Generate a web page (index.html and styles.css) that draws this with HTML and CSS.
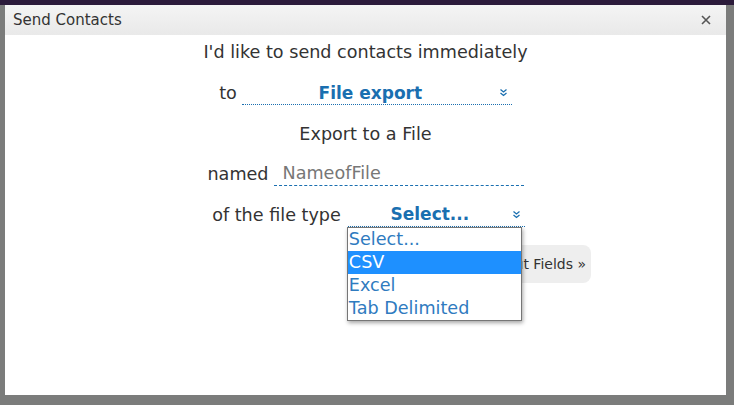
FILE: index.html
```html
<!DOCTYPE html>
<html>
<head>
<meta charset="utf-8">
<link rel="stylesheet" href="styles.css">
</head>
<body>
<div class="page">
  <div class="topbar"></div>
  <div class="dialog">
    <div class="titlebar">
      <span class="title">Send Contacts</span>
      <svg class="close" width="12" height="12" viewBox="0 0 12 12"><path d="M2 2 L10 10 M10 2 L2 10" stroke="#555" stroke-width="1.6" fill="none"/></svg>
    </div>
    <div class="content">
      <div class="intro">I'd like to send contacts immediately</div>
      <div class="row gap5">
        <span class="label">to</span>
        <div class="select sel-to">
          <span class="sel-text">File export</span>
          <svg class="chev" width="9" height="9" viewBox="0 0 9 9"><path d="M1.5 1.5 L4.5 4 L7.5 1.5 M1.5 5 L4.5 7.5 L7.5 5" stroke="#1a6fb0" stroke-width="1.3" fill="none"/></svg>
        </div>
      </div>
      <div class="row"><span class="label">Export to a File</span></div>
      <div class="row gap5">
        <span class="label">named</span>
        <div class="input">NameofFile</div>
      </div>
      <div class="row gap7 shift">
        <span class="label">of the file type</span>
        <div class="select sel-type">
          <span class="sel-text">Select...</span>
          <svg class="chev" width="9" height="9" viewBox="0 0 9 9"><path d="M1.5 1.5 L4.5 4 L7.5 1.5 M1.5 5 L4.5 7.5 L7.5 5" stroke="#1a6fb0" stroke-width="1.3" fill="none"/></svg>
          <ul class="listbox">
            <li>Select...</li>
            <li class="active">CSV</li>
            <li>Excel</li>
            <li>Tab Delimited</li>
          </ul>
        </div>
      </div>
      <div class="actions">
        <span class="btn">Map Input Fields »</span>
      </div>
    </div>
  </div>
</div>
</body>
</html>
```
FILE: styles.css
```css
* { box-sizing: border-box; }
html, body { margin: 0; padding: 0; }
body {
  background: #7b7c7b;
  font-family: "DejaVu Sans", "Open Sans", sans-serif;
  width: 734px;
  height: 405px;
  overflow: hidden;
}
.page { width: 734px; height: 405px; }
.topbar {
  height: 5px;
  background: #2c1b3b;
}
.dialog {
  margin-left: 5px;
  width: 721px;
  height: 390px;
  background: #fff;
  display: flex;
  flex-direction: column;
}
.titlebar {
  height: 30px;
  background: linear-gradient(#f4f4f4, #e9e9e9);
  display: flex;
  align-items: center;
  justify-content: space-between;
  padding: 0 14px 0 8px;
}
.title { font-size: 15px; color: #333; }
.close { display: block; }
.content {
  display: flex;
  flex-direction: column;
  align-items: center;
}
.intro {
  height: 34px;
  line-height: 34px;
  margin-bottom: 4px;
  font-size: 17.6px;
  color: #333;
}
.row {
  height: 40.5px;
  display: flex;
  align-items: center;
  justify-content: center;
  width: 100%;
}
.gap5 { gap: 5px; }
.gap7 { gap: 7px; }
.shift { padding-left: 6px; }
.label { font-size: 17.6px; color: #333; }
.select {
  position: relative;
  display: flex;
  align-items: center;
  height: 24px;
  border-bottom: 1px dotted #1a6fb0;
  color: #1a6fb0;
  font-weight: bold;
  font-size: 17px;
}
.sel-to { width: 270px; }
.sel-type { width: 177px; }
.sel-text { flex: 1; text-align: center; }
.chev { margin-right: 4px; }
.input {
  width: 250px;
  height: 24px;
  border-bottom: 1px dashed #1a6fb0;
  color: #777;
  font-size: 17.6px;
  padding-left: 9px;
  line-height: 22px;
}
.listbox {
  position: absolute;
  left: -1px;
  top: 24px;
  width: 175px;
  margin: 0;
  padding: 0;
  list-style: none;
  background: #fff;
  border: 1px solid #767676;
  box-shadow: 1px 2px 4px rgba(0,0,0,0.35);
  font-weight: normal;
  z-index: 5;
}
.listbox li {
  height: 23px;
  line-height: 23px;
  padding-left: 1px;
  color: #2f7bbf;
  font-size: 17.6px;
}
.listbox li.active { background: #1e90ff; color: #fff; }
.actions {
  width: 100%;
  display: flex;
  justify-content: flex-end;
  padding-right: 135px;
  margin-top: 10px;
}
.btn {
  height: 38px;
  line-height: 38px;
  padding: 0 5px 0 14px;
  background: #eeeeee;
  border-radius: 8px;
  font-size: 14px;
  color: #333;
}
```
